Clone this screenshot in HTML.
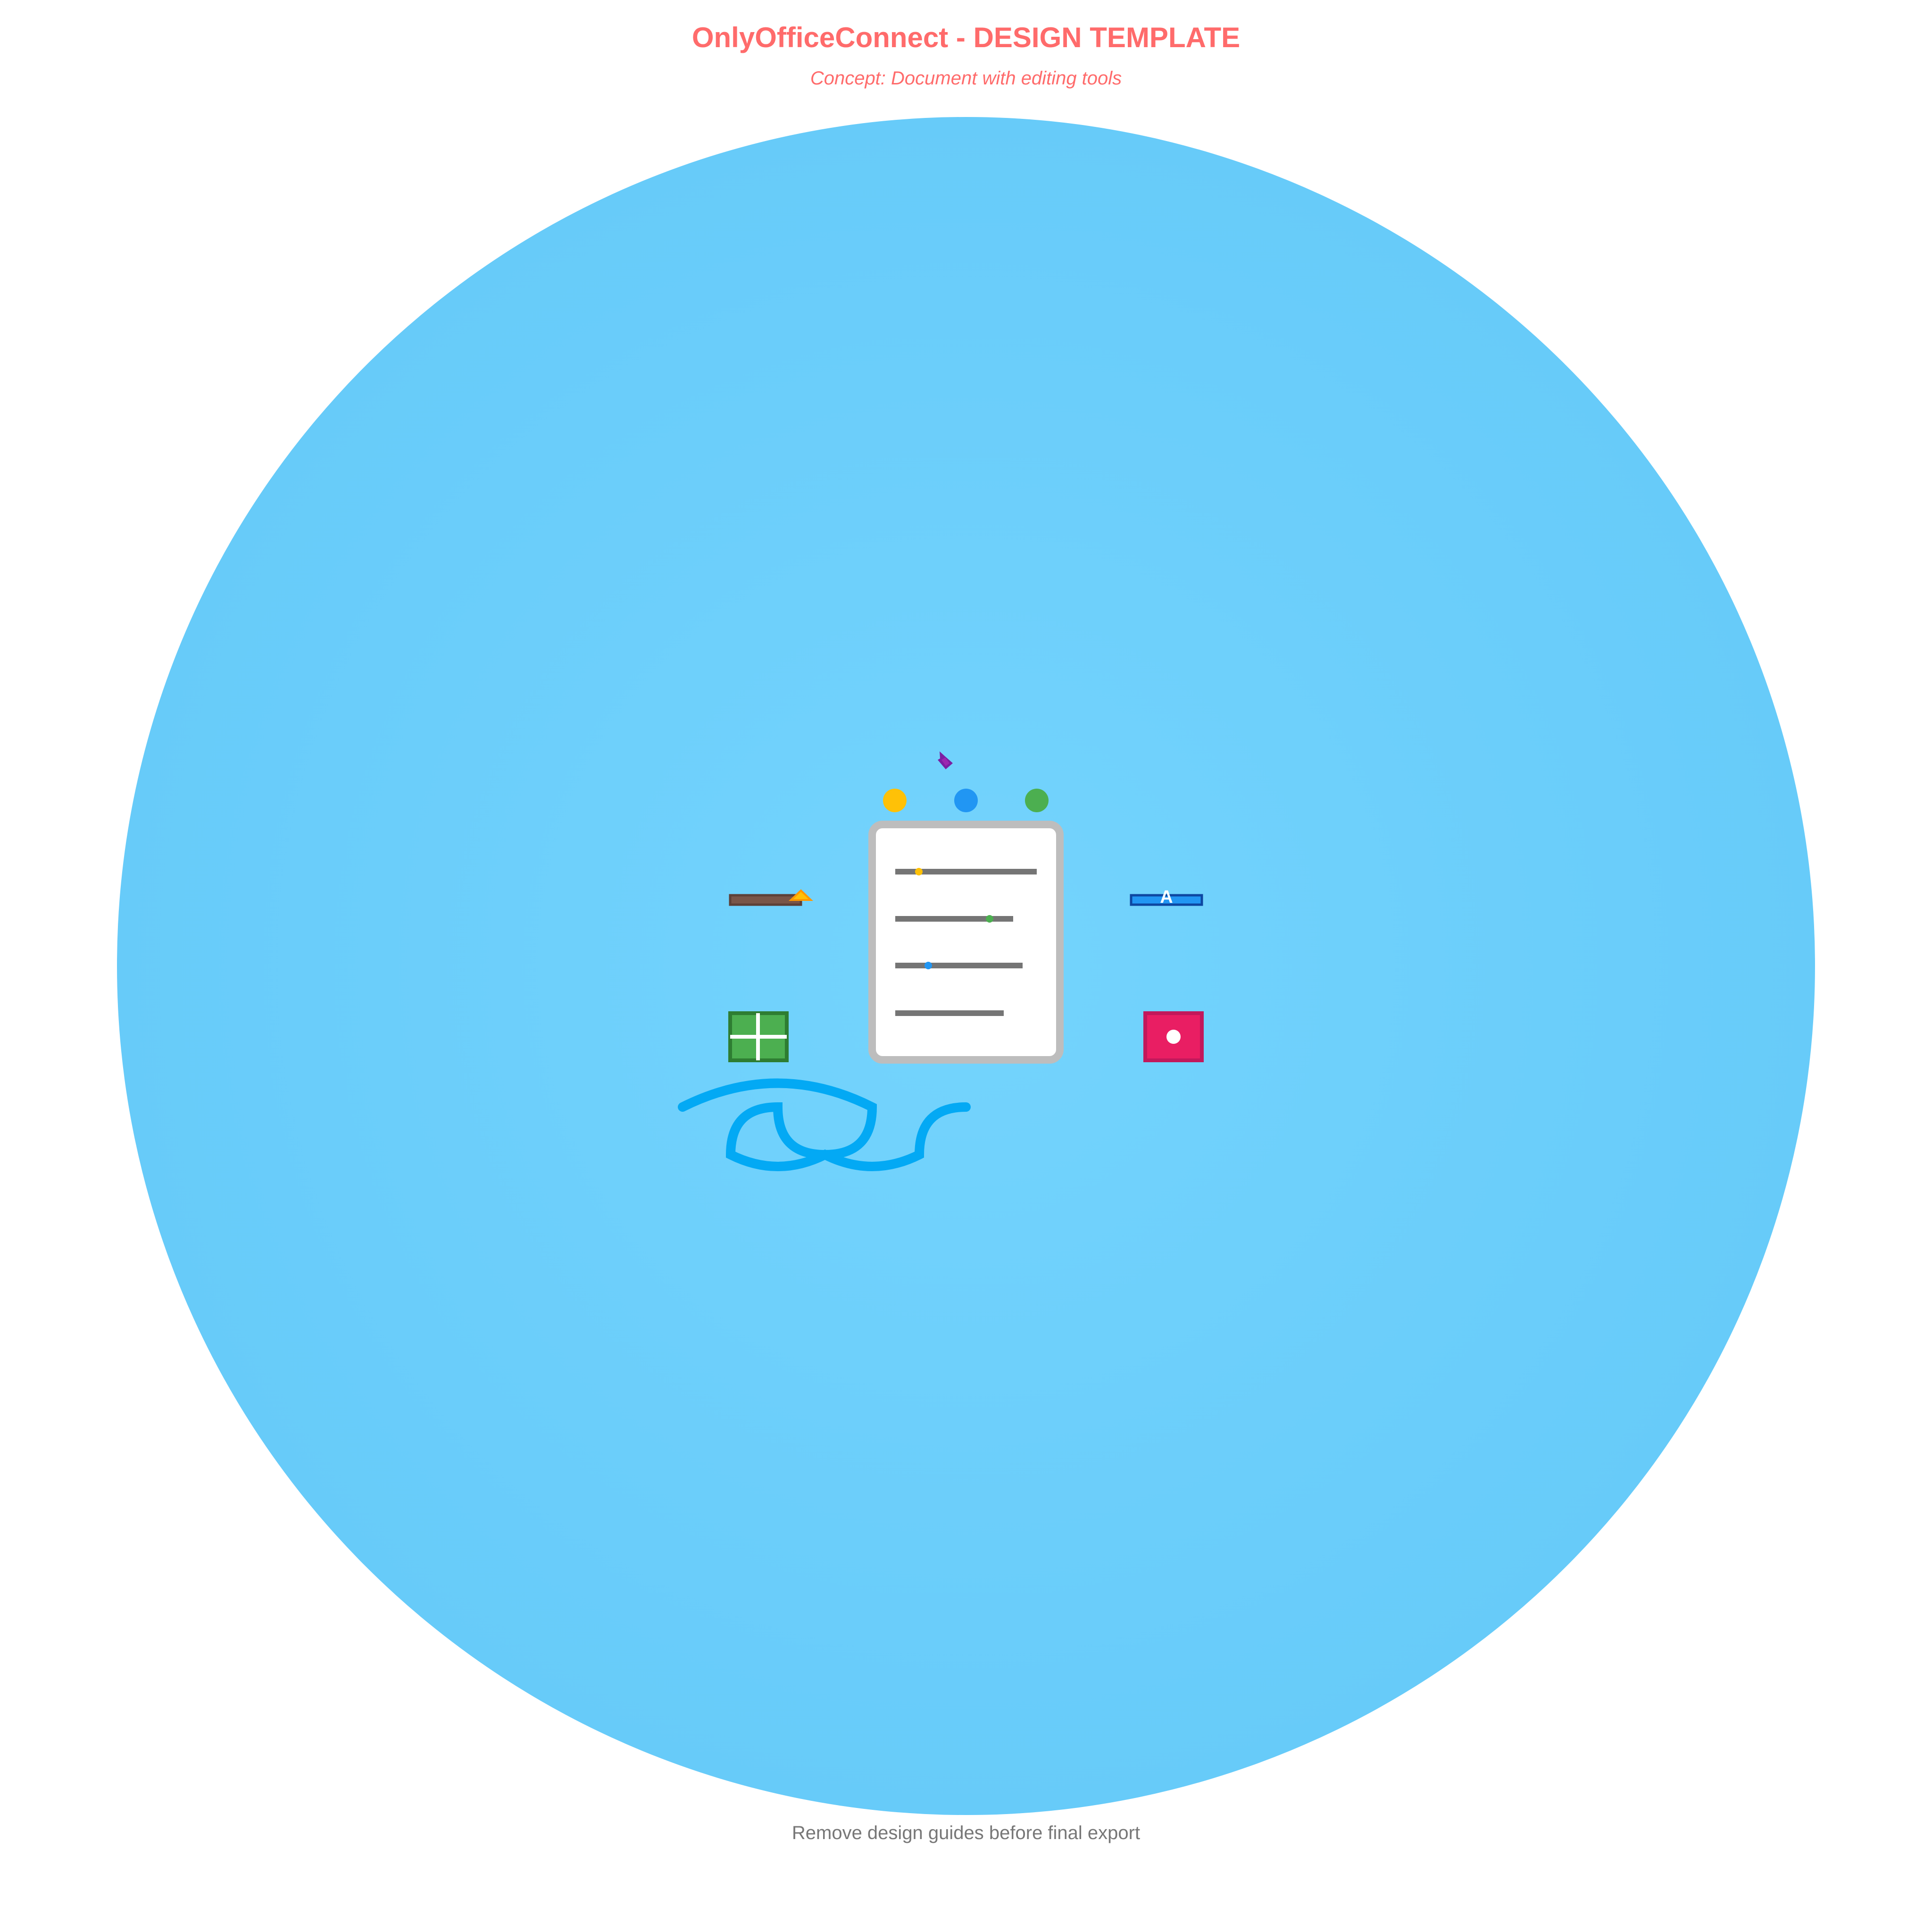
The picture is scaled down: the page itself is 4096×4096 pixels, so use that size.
<!DOCTYPE html>
<html><head><meta charset="utf-8"><style>
html,body{margin:0;padding:0;background:#fff;}
svg{display:block;}
</style></head><body>
<svg width="4096" height="4096" viewBox="0 0 4096 4096" xmlns="http://www.w3.org/2000/svg">
<defs>
<radialGradient id="bg" cx="50%" cy="50%" r="50%">
<stop offset="0" stop-color="#74d4fd"/>
<stop offset="1" stop-color="#67cbf9"/>
</radialGradient>
</defs>
<rect width="4096" height="4096" fill="#fff"/>
<text x="2048" y="100" text-anchor="middle" font-family="Liberation Sans, sans-serif" font-weight="bold" font-size="60" fill="#ff6b6b">OnlyOfficeConnect - DESIGN TEMPLATE</text>
<text x="2048" y="179" text-anchor="middle" font-family="Liberation Sans, sans-serif" font-style="italic" font-size="40" fill="#ff6b6b">Concept: Document with editing tools</text>
<circle cx="2048" cy="2048" r="1800" fill="url(#bg)"/>
<text x="2048" y="3899" text-anchor="middle" font-family="Liberation Sans, sans-serif" font-size="40" fill="#777">Remove design guides before final export</text>

<polygon points="1992,1593 1993,1608 1988,1611 2005,1631 2020,1618 2003,1603" fill="#7b1fa2"/>
<polygon points="1996,1611 2004,1606 2013,1618 2005,1624" fill="#9c27b0"/>

<circle cx="1897" cy="1697" r="25" fill="#ffc107"/>
<circle cx="2048" cy="1697" r="25" fill="#2196f3"/>
<circle cx="2198" cy="1697" r="25" fill="#4caf50"/>

<rect x="1849" y="1748" width="398" height="499" rx="22" fill="#fff" stroke="#bdbdbd" stroke-width="16"/>
<g stroke="#757575" stroke-width="12">
<line x1="1898" y1="1848" x2="2198" y2="1848"/>
<line x1="1898" y1="1948" x2="2148" y2="1948"/>
<line x1="1898" y1="2047" x2="2168" y2="2047"/>
<line x1="1898" y1="2148" x2="2128" y2="2148"/>
</g>
<circle cx="1948" cy="1848" r="8" fill="#ffc107"/>
<circle cx="2098" cy="1948" r="8" fill="#4caf50"/>
<circle cx="1968" cy="2047" r="8" fill="#2196f3"/>

<rect x="1548" y="1898" width="150" height="20" fill="#795548" stroke="#5d4037" stroke-width="5"/>
<polygon points="1698,1888 1719,1908 1677,1908" fill="#ffc107" stroke="#ff9800" stroke-width="4"/>

<rect x="2398" y="1898" width="150" height="20" fill="#2196f3" stroke="#0d47a1" stroke-width="5"/>
<text x="2473" y="1914" text-anchor="middle" font-family="Liberation Sans, sans-serif" font-weight="bold" font-size="38" fill="#fff">A</text>

<rect x="1548" y="2148" width="120" height="100" fill="#4caf50" stroke="#2e7d32" stroke-width="8"/>
<line x1="1607" y1="2148" x2="1607" y2="2248" stroke="#fff" stroke-width="8"/>
<line x1="1548" y1="2198" x2="1668" y2="2198" stroke="#fff" stroke-width="8"/>

<rect x="2428" y="2148" width="120" height="100" fill="#e91e63" stroke="#c2185b" stroke-width="8"/>
<circle cx="2488" cy="2198" r="15" fill="#fff"/>

<path d="M1447,2347 Q1649,2246 1849,2347 Q1849,2448 1749,2448 Q1649,2448 1649,2347 Q1549,2347 1549,2448 Q1649,2498 1749,2448 Q1849,2498 1949,2448 Q1949,2347 2048,2347" fill="none" stroke="#03a9f4" stroke-width="20" stroke-linecap="round"/>
</svg>
</body></html>
